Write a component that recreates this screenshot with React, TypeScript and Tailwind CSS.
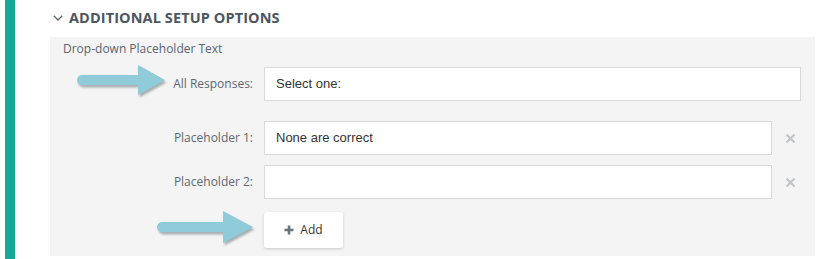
import React from "react";

function Arrow({ w, h, shaftStart, headStart, tip, cy, shaftHalf, headHalf }: { w: number; h: number; shaftStart: number; headStart: number; tip: number; cy: number; shaftHalf: number; headHalf: number }) {
  const d = `M ${shaftStart + shaftHalf} ${cy - shaftHalf} L ${headStart} ${cy - shaftHalf} L ${headStart} ${cy - headHalf} L ${tip} ${cy} L ${headStart} ${cy + headHalf} L ${headStart} ${cy + shaftHalf} L ${shaftStart + shaftHalf} ${cy + shaftHalf} A ${shaftHalf} ${shaftHalf} 0 0 1 ${shaftStart + shaftHalf} ${cy - shaftHalf} Z`;
  return (
    <svg width={w} height={h} viewBox={`0 0 ${w} ${h}`}>
      <defs>
        <filter id={`b${w}`} x="-20%" y="-40%" width="140%" height="180%">
          <feGaussianBlur stdDeviation="1.2" />
        </filter>
      </defs>
      <path d={d} fill="#6b7478" opacity="0.55" transform="translate(1.5,2.5)" filter={`url(#b${w})`} />
      <path d={d} fill="#8fcbd9" />
    </svg>
  );
}

function XIcon() {
  return (
    <svg width="11" height="11" viewBox="0 0 11 11">
      <path d="M1.5 1.5 L9.5 9.5 M9.5 1.5 L1.5 9.5" stroke="#c3c6c8" strokeWidth="2.2" strokeLinecap="butt" />
    </svg>
  );
}

export default function App() {
  const labelCls = "w-[201px] text-right text-[12px] text-[#5f6871] pr-[11px] leading-none";
  const inputCls = "h-[34px] bg-white border border-[#d9d9d9] flex items-center px-[11px] text-[13px] text-[#333] font-['Liberation_Sans',Arial,sans-serif]";
  return (
    <div className="w-[817px] h-[259px] bg-white flex font-['Open_Sans',sans-serif] relative overflow-hidden">
      <div className="ml-[5px] w-[10px] h-full bg-[#17a996]" />
      <div className="ml-[35px] flex flex-col">
        <div className="h-[37px] flex items-center pl-[3px] gap-[6px] pb-[1px]">
          <svg width="10" height="6" viewBox="0 0 10 6">
            <path d="M0.8 0.8 L5 5 L9.2 0.8" stroke="#5b6570" strokeWidth="1.3" fill="none" />
          </svg>
          <span className="text-[14.5px] font-bold text-[#4c5661] tracking-[0.1px]">ADDITIONAL SETUP OPTIONS</span>
        </div>
        <div className="w-[765px] h-[219px] bg-[#f4f4f4] flex flex-col pl-[13px]">
          <div className="pt-[4px] h-[19px] text-[12px] text-[#5a6470] leading-[16px]">Drop-down Placeholder Text</div>
          <div className="mt-[11px] flex items-center">
            <div className={labelCls}>All Responses:</div>
            <div className={`${inputCls} w-[537px]`}>Select one:</div>
          </div>
          <div className="mt-[20px] flex items-center">
            <div className={labelCls}>Placeholder 1:</div>
            <div className={`${inputCls} w-[508px]`}>None are correct</div>
            <div className="ml-[13px]"><XIcon /></div>
          </div>
          <div className="mt-[10px] flex items-center">
            <div className={labelCls}>Placeholder 2:</div>
            <div className={`${inputCls} w-[508px]`}></div>
            <div className="ml-[13px]"><XIcon /></div>
          </div>
          <div className="mt-[13px] flex">
            <div className="w-[201px]" />
            <button className="w-[79px] h-[36px] bg-white rounded-[3px] shadow-[0_1px_3px_rgba(0,0,0,0.18)] flex items-center justify-center gap-[6px] text-[12px] text-[#333]">
              <svg width="10" height="10" viewBox="0 0 10 10">
                <path d="M5 0.5 V9.5 M0.5 5 H9.5" stroke="#6a737b" strokeWidth="2.6" />
              </svg>
              <span>Add</span>
            </button>
          </div>
        </div>
      </div>
      <div className="absolute left-[77px] top-[63px]">
        <Arrow w={94} h={38} shaftStart={0} headStart={61} tip={88} cy={17} shaftHalf={5} headHalf={15} />
      </div>
      <div className="absolute left-[155px] top-[207px]">
        <Arrow w={104} h={42} shaftStart={2} headStart={68} tip={98} cy={20} shaftHalf={5} headHalf={16} />
      </div>
    </div>
  );
}
